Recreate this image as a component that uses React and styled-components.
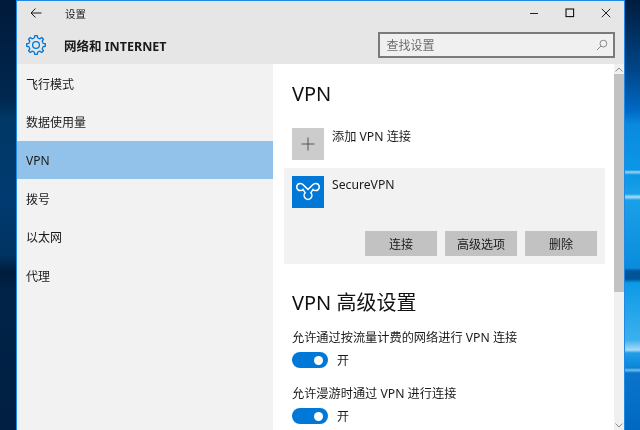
import React from 'react'
import styled, { createGlobalStyle } from 'styled-components'

const GlobalStyle = createGlobalStyle`
    html, body {
        margin: 0;
        height: 100%;
        overflow: hidden;
    }
    body {
        font-family: "Noto Sans", "Noto Sans CJK SC", sans-serif;
        color: #1a1a1a;
    }
`

const Desktop = styled.div`
    height: 430px;
    padding: 0 15px 0 16px;
    box-sizing: border-box;
    overflow: hidden;
    background:
        linear-gradient(180deg, #001a3a 0, #002850 100px, #003866 118px, #003a70 200px, #003462 255px, #001c3c 272px, #002448 292px, #001f42 430px) left / 16px 100% no-repeat,
        linear-gradient(180deg, #001c3e 0, #004688 70px, #0068c4 110px, #0a8ae0 125px, #0c96e6 170px, #9ad4f4 172px, #0c96e6 175px, #1aa0e8 194px, #b0def6 197px, #1aa0e8 200px, #0a8cdc 268px, #00549a 271px, #00549a 279px, #0c9ae6 283px, #3cb0ee 340px, #a8daf6 350px, #1e9ee8 353px, #0a84d8 368px, #78bcea 370px, #0a74cc 373px, #0068c0 430px) right / 16px 100% no-repeat;
`

const Window = styled.div`
    height: 430px;
    display: flex;
    flex-direction: column;
    border: 1px solid #1e8ae6;
    border-bottom: 0;
    box-sizing: border-box;
    background: #e6e6e6;
    filter: blur(0.3px);
`

const TitleBar = styled.div`
    height: 24px;
    flex: none;
    display: flex;
    align-items: center;
    font-size: 10.5px;
`

const BackButton = styled.div`
    width: 38px;
    margin-right: 10px;
    display: flex;
    justify-content: center;
    color: #1a1a1a;
`

const TitleText = styled.span`
    flex: 1;
`

const WinControl = styled.div`
    width: 36px;
    display: flex;
    justify-content: center;
    align-items: center;
`

const Header = styled.div`
    height: 39px;
    flex: none;
    box-sizing: border-box;
    padding: 1px 0 0 9px;
    display: flex;
    align-items: center;
`

const HeaderTitle = styled.span`
    flex: 1;
    margin-left: 18px;
    font-size: 12.5px;
    font-weight: 700;
`

const SearchBox = styled.div`
    width: 237px;
    height: 26px;
    margin-right: 9.5px;
    box-sizing: border-box;
    border: 2px solid #7a7a7a;
    background: #f0f0f0;
    display: flex;
    align-items: center;
    justify-content: space-between;
    padding: 0 5px 0 7px;
    font-size: 12px;
    color: #6d6d6d;
`

const Body = styled.div`
    flex: 1;
    min-height: 0;
    display: flex;
`

const Sidebar = styled.nav`
    width: 256px;
    flex: none;
    background: #f2f2f2;
`

const NavItem = styled.div`
    height: 38.4px;
    box-sizing: border-box;
    padding: 1px 0 0 9px;
    display: flex;
    align-items: center;
    font-size: 12px;
    background: ${props => (props.$active ? '#92c1e9' : 'transparent')};
`

const Content = styled.main`
    flex: 1;
    min-width: 0;
    background: #fff;
    padding: 16px 9px 0 19px;
    overflow: hidden;
`

const Heading = styled.h2`
    margin: 0;
    font-size: 20px;
    line-height: 27px;
    font-weight: 400;
    color: #111;
`

const AddRow = styled.div`
    display: flex;
    gap: 8px;
    margin-top: 21px;
    font-size: 12.2px;
    line-height: 17px;
`

const AddTile = styled.div`
    width: 32px;
    height: 32px;
    background: #cccccc;
    display: flex;
    align-items: center;
    justify-content: center;
`

const Card = styled.section`
    margin: 8px 0 0 -8px;
    height: 96px;
    box-sizing: border-box;
    padding: 8px;
    background: #f2f2f2;
    display: flex;
    flex-direction: column;
    justify-content: space-between;
`

const CardTop = styled.div`
    display: flex;
    gap: 8px;
    font-size: 12.2px;
    line-height: 17px;
`

const VpnTile = styled.div`
    width: 32px;
    height: 32px;
    background: #0078d7;
    display: flex;
`

const ButtonRow = styled.div`
    display: flex;
    justify-content: flex-end;
    gap: 8px;
`

const ActionButton = styled.div`
    width: 72px;
    height: 25px;
    background: #c2c2c2;
    display: flex;
    align-items: center;
    justify-content: center;
    font-size: 12px;
`

const SectionHeading = styled(Heading)`
    margin-top: 25px;
`

const Setting = styled.div`
    margin-top: ${props => props.$first ? '13px' : '16px'};
`

const SettingLabel = styled.div`
    font-size: 12.2px;
    line-height: 17px;
`

const ToggleRow = styled.div`
    display: flex;
    align-items: center;
    gap: 9px;
    margin-top: 5px;
    font-size: 12px;
`

const Toggle = styled.div`
    width: 36px;
    height: 16px;
    border-radius: 8px;
    background: #0078d7;
    display: flex;
    align-items: center;
    justify-content: flex-end;
    padding-right: 5px;
    box-sizing: border-box;
`

const Knob = styled.div`
    width: 9px;
    height: 9px;
    border-radius: 50%;
    background: #fff;
`

const Scrollbar = styled.div`
    width: 10px;
    flex: none;
    background: #f0f0f0;
    display: flex;
    flex-direction: column;
`

const ScrollArrow = styled.div`
    height: 10px;
    flex: none;
    display: flex;
    align-items: center;
    justify-content: center;
`

const ScrollThumb = styled.div`
    height: 218px;
    flex: none;
    background: #c2c2c2;
`

const ScrollGap = styled.div`
    flex: 1;
`

const gearPath = () => {
    const teeth = 8
    const points = []
    for (let i = 0; i < teeth; i++) {
        const a = (i / teeth) * Math.PI * 2
        const step = (Math.PI * 2) / teeth
        const pts = [
            [7.2, a - step * 0.5],
            [7.4, a - step * 0.27],
            [9.4, a - step * 0.17],
            [9.4, a + step * 0.17],
            [7.4, a + step * 0.27],
        ]
        pts.forEach(([r, t]) => points.push(`${(10 + r * Math.cos(t)).toFixed(2)} ${(10 + r * Math.sin(t)).toFixed(2)}`))
    }
    return 'M' + points.join('L') + 'Z'
}

const GearIcon = () => (
    <svg width="20" height="20" viewBox="0 0 20 20" fill="none" stroke="#0078d7" strokeWidth="1.3" strokeLinejoin="round">
        <path d={gearPath()} />
        <circle cx="10" cy="10" r="3.4" />
    </svg>
)

const BackIcon = () => (
    <svg width="12" height="12" viewBox="0 0 12 12" fill="none" stroke="#1a1a1a" strokeWidth="1">
        <path d="M1 6H11.5M5.5 1.5L1 6L5.5 10.5" />
    </svg>
)

const MinIcon = () => (
    <svg width="10" height="10" viewBox="0 0 10 10" stroke="#222" strokeWidth="1"><path d="M1 5.5H9" /></svg>
)

const MaxIcon = () => (
    <svg width="10" height="10" viewBox="0 0 10 10" fill="none" stroke="#111" strokeWidth="1.1"><rect x="1" y="1" width="7.6" height="7.6" /></svg>
)

const CloseIcon = () => (
    <svg width="10" height="10" viewBox="0 0 10 10" fill="none" stroke="#222" strokeWidth="1"><path d="M.8 .8L9.2 9.2M9.2 .8L.8 9.2" /></svg>
)

const SearchIcon = () => (
    <svg width="12" height="12" viewBox="0 0 12 12" fill="none" stroke="#8a8a8a" strokeWidth="1">
        <circle cx="7.4" cy="4.6" r="3.4" />
        <path d="M5 7L1 11" />
    </svg>
)

const PlusIcon = () => (
    <svg width="14" height="14" viewBox="0 0 14 14" stroke="#555" strokeWidth="1"><path d="M7 .5V13.5M.5 7H13.5" /></svg>
)

const SecureIcon = () => (
    <svg width="32" height="32" viewBox="0 0 32 32" fill="none" stroke="#fff" strokeWidth="1.5">
        <path d="M11 8.6L16 13.5L21 8.6A3.6 3.6 0 1 1 21 13.4L18.8 16.8A3.9 3.9 0 1 1 13.2 16.8L11 13.4A3.6 3.6 0 1 1 11 8.6Z" />
    </svg>
)

const ChevronUp = () => (
    <svg width="8" height="5" viewBox="0 0 8 5" fill="none" stroke="#8c8c8c" strokeWidth="1"><path d="M.5 4.5L4 1L7.5 4.5" /></svg>
)

const ChevronDown = () => (
    <svg width="8" height="5" viewBox="0 0 8 5" fill="none" stroke="#8c8c8c" strokeWidth="1"><path d="M.5 .5L4 4L7.5 .5" /></svg>
)

const navItems = ['飞行模式', '数据使用量', 'VPN', '拨号', '以太网', '代理']

const settings = ['允许通过按流量计费的网络进行 VPN 连接', '允许漫游时通过 VPN 进行连接']

function App() {
    return (
        <Desktop>
            <GlobalStyle />
            <Window>
                <TitleBar>
                    <BackButton><BackIcon /></BackButton>
                    <TitleText>设置</TitleText>
                    <WinControl><MinIcon /></WinControl>
                    <WinControl><MaxIcon /></WinControl>
                    <WinControl><CloseIcon /></WinControl>
                </TitleBar>
                <Header>
                    <GearIcon />
                    <HeaderTitle>网络和 INTERNET</HeaderTitle>
                    <SearchBox>
                        查找设置
                        <SearchIcon />
                    </SearchBox>
                </Header>
                <Body>
                    <Sidebar>
                        {navItems.map(item => (
                            <NavItem key={item} $active={item === 'VPN'}>{item}</NavItem>
                        ))}
                    </Sidebar>
                    <Content>
                        <Heading>VPN</Heading>
                        <AddRow>
                            <AddTile><PlusIcon /></AddTile>
                            添加 VPN 连接
                        </AddRow>
                        <Card>
                            <CardTop>
                                <VpnTile><SecureIcon /></VpnTile>
                                SecureVPN
                            </CardTop>
                            <ButtonRow>
                                <ActionButton>连接</ActionButton>
                                <ActionButton>高级选项</ActionButton>
                                <ActionButton>删除</ActionButton>
                            </ButtonRow>
                        </Card>
                        <SectionHeading>VPN 高级设置</SectionHeading>
                        {settings.map((label, i) => (
                            <Setting key={label} $first={i === 0}>
                                <SettingLabel>{label}</SettingLabel>
                                <ToggleRow>
                                    <Toggle><Knob /></Toggle>
                                    开
                                </ToggleRow>
                            </Setting>
                        ))}
                    </Content>
                    <Scrollbar>
                        <ScrollArrow><ChevronUp /></ScrollArrow>
                        <ScrollThumb />
                        <ScrollGap />
                        <ScrollArrow><ChevronDown /></ScrollArrow>
                    </Scrollbar>
                </Body>
            </Window>
        </Desktop>
    )
}

export default App
